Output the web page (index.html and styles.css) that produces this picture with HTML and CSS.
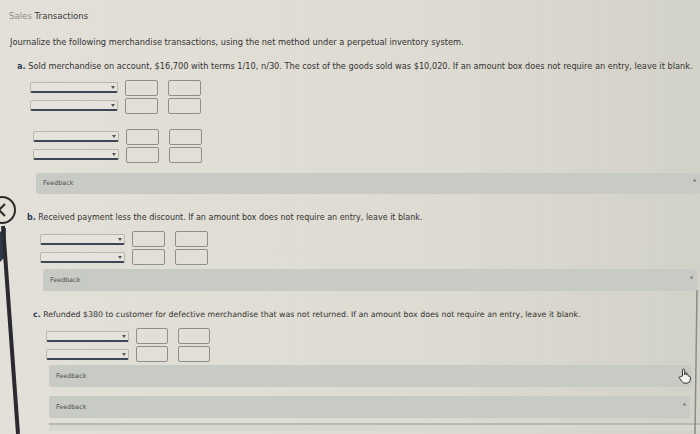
FILE: index.html
```html
<!DOCTYPE html>
<html lang="en">
<head>
    <meta charset="UTF-8">
    <title>Sales Transactions</title>
    <link rel="stylesheet" href="styles.css">
</head>
<body>
    <div class="sheet">
        <h1 class="title"><span class="soft">Sales</span> Transactions</h1>
        <p class="intro">Journalize the following merchandise transactions, using the net method under a perpetual inventory system.</p>

        <!-- a -->
        <div class="part part-a">
            <p class="ask"><b>a.</b> Sold merchandise on account, $16,700 with terms 1/10, n/30. The cost of the goods sold was $10,020. If an amount box does not require an entry, leave it blank.</p>
            <div class="entry">
                <div class="line"><span class="pick"></span><span class="amt"></span><span class="amt"></span></div>
                <div class="line"><span class="pick"></span><span class="amt"></span><span class="amt"></span></div>
            </div>
            <div class="entry shift">
                <div class="line"><span class="pick"></span><span class="amt"></span><span class="amt"></span></div>
                <div class="line"><span class="pick"></span><span class="amt"></span><span class="amt"></span></div>
            </div>
            <div class="feedback">Feedback<span class="caret">&#9650;</span></div>
        </div>

        <!-- b -->
        <div class="part part-b">
            <p class="ask"><b>b.</b> Received payment less the discount. If an amount box does not require an entry, leave it blank.</p>
            <div class="entry">
                <div class="line"><span class="pick"></span><span class="amt"></span><span class="amt"></span></div>
                <div class="line"><span class="pick"></span><span class="amt"></span><span class="amt"></span></div>
            </div>
            <div class="feedback">Feedback<span class="caret">&#9650;</span></div>
        </div>

        <!-- c -->
        <div class="part part-c">
            <p class="ask"><b>c.</b> Refunded $380 to customer for defective merchandise that was not returned. If an amount box does not require an entry, leave it blank.</p>
            <div class="entry">
                <div class="line"><span class="pick"></span><span class="amt"></span><span class="amt"></span></div>
                <div class="line"><span class="pick"></span><span class="amt"></span><span class="amt"></span></div>
            </div>
            <div class="feedback">Feedback<span class="caret">&#9650;</span>
                <svg class="hand" width="14" height="16" viewBox="0 0 14 16">
                    <path d="M4.5 8V2.2c0-.7.5-1.2 1.1-1.2s1.1.5 1.1 1.2V7l.2-1.4c.6-.5 1.6-.3 1.9.5l.1 1c.6-.5 1.6-.2 1.8.6l.1.8c.6-.4 1.5 0 1.6.7V11c0 2.4-1.7 4.2-4 4.2H7c-1.4 0-2.4-.6-3.2-1.7L1.4 10c-.5-.8.3-1.7 1.1-1.3z" fill="#f2f2ee" stroke="#333" stroke-width="1"/>
                </svg>
            </div>
            <div class="feedback last">Feedback<span class="caret">&#9650;</span></div>
        </div>

        <div class="foot"></div>
    </div>

    <!-- monitor edge and back button at the left -->
    <svg class="edge" width="40" height="434" viewBox="0 0 40 434">
        <path d="M6 228 L0 232 L0 262 L4 258 Z" fill="#2d3a4a"/>
        <path d="M3 226 L18 434" stroke="#2a2a30" stroke-width="4" fill="none"/>
        <circle cx="2" cy="210" r="13" fill="#e3e0d8" stroke="#2a2a2a" stroke-width="2"/>
        <path d="M5 204 L-1 210 L5 216" stroke="#2a2a2a" stroke-width="2" fill="none"/>
    </svg>
    <svg class="rim" width="8" height="434" viewBox="0 0 8 434">
        <path d="M5 290 L3 434" stroke="#8c8c86" stroke-width="1.5" fill="none"/>
    </svg>
</body>
</html>
```

FILE: styles.css
```css
*{
    margin: 0;
    padding: 0;
    box-sizing: border-box;
}
html{
    height: 100%;
}
body{
    height: 100%;
    overflow: hidden;
    font-family: "DejaVu Sans", Verdana, sans-serif;
    color: #333;
    background-color: #dfdcd4;
    background-image: linear-gradient(to right, #e3e0d9 0%, #dedbd2 60%, #d3d2c8 100%);
}
.sheet{
    padding: 10px 0 0 9px;
}
.title{
    font-size: 8.6px;
    font-weight: normal;
    color: #3a3a3a;
    line-height: 12px;
}
.title .soft{
    color: #8a8f7e;
}
.intro{
    font-size: 8.25px;
    line-height: 11px;
    margin: 15px 0 0 1px;
}
.ask{
    line-height: 11px;
    white-space: nowrap;
}
.ask b{
    color: #2f4055;
}
.part-a{
    margin: 13px 0 0 8px;
}
.part-a .ask{
    font-size: 8.2px;
}
.part-b{
    margin: 18px 0 0 18px;
}
.part-b .ask{
    font-size: 8px;
}
.part-c{
    margin: 17.5px 0 0 24px;
}
.part-c .ask{
    font-size: 7.85px;
}
.entry{
    display: flex;
    flex-direction: column;
    gap: 2px;
    margin: 7.5px 0 0 13px;
}
.part-b .entry,
.part-c .entry{
    margin-top: 8.5px;
}
.entry.shift{
    margin-top: 15px;
    margin-left: 16px;
}
.line{
    display: flex;
    align-items: center;
    gap: 10px;
}
.pick{
    position: relative;
    width: 88px;
    height: 11px;
    border: 1px solid #b9b8b0;
    border-bottom: 2px solid #3e4554;
    border-radius: 2px;
    background: #e6e3dc;
    margin-right: -3px;
}
.shift .pick{
    width: 86px;
}
.part-b .pick{
    width: 85px;
}
.part-c .pick{
    width: 83px;
}
.pick::after{
    content: "";
    position: absolute;
    right: 2px;
    top: 3px;
    border-left: 2px solid transparent;
    border-right: 2px solid transparent;
    border-top: 3px solid #555;
}
.amt{
    width: 33px;
    height: 16px;
    border: 1.5px solid #8e8e8a;
    border-radius: 2px;
    background: #e2dfd8;
}
.part-c .amt{
    width: 32px;
}
.feedback{
    position: relative;
    display: flex;
    align-items: center;
    height: 21px;
    margin: 10px 0 0 19px;
    padding-left: 7px;
    border-radius: 3px;
    background: #c8cac5;
    font-size: 6.4px;
    color: #4f5050;
}
.caret{
    margin-left: auto;
    margin-right: 4px;
    margin-top: -8px;
    font-size: 4px;
    color: #777;
}
.part-b .feedback{
    margin: 4px 3px 0 16px;
    height: 22px;
}
.part-c .feedback{
    margin: 3px 8px 0 16px;
    height: 22px;
}
.part-c .feedback.last{
    margin-top: 9px;
    margin-right: 10px;
}
.hand{
    position: absolute;
    right: 0;
    top: 3px;
}
.foot{
    height: 8px;
    margin: 5px 0 0 40px;
    border-top: 2px solid #b9b9b3;
    background: #d8d7d0;
}
.edge{
    position: absolute;
    left: 0;
    top: 0;
}
.rim{
    position: absolute;
    right: 0;
    top: 0;
}
```
